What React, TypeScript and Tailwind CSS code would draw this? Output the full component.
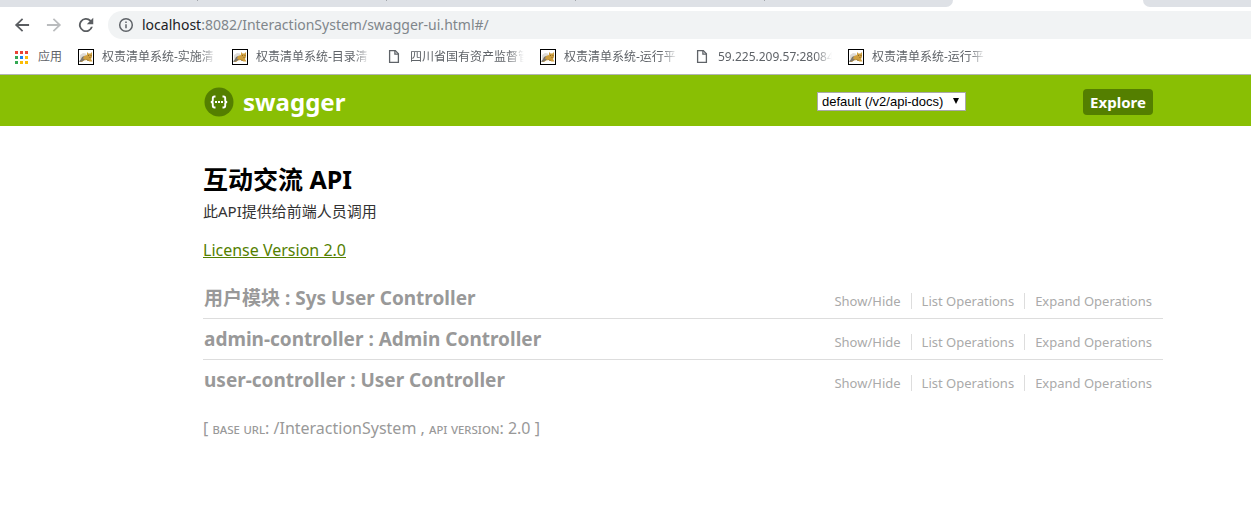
import React from "react";

const BOOKMARKS = [
  { kind: "cat", label: "权责清单系统-实施清" },
  { kind: "cat", label: "权责清单系统-目录清" },
  { kind: "page", label: "四川省国有资产监督管" },
  { kind: "cat", label: "权责清单系统-运行平" },
  { kind: "page", label: "59.225.209.57:28084" },
  { kind: "cat", label: "权责清单系统-运行平" },
];

const RESOURCES = [
  "用户模块 : Sys User Controller",
  "admin-controller : Admin Controller",
  "user-controller : User Controller",
];

const APP_DOTS = [
  "#ea4335", "#ea4335", "#ea4335",
  "#34a853", "#1a85f0", "#fbbc05",
  "#34a853", "#fbbc05", "#fbbc05",
];

function CatIcon() {
  return (
    <svg viewBox="0 0 16 16" className="size-4 shrink-0" aria-hidden="true">
      <rect width="16" height="16" fill="#000" />
      <rect x="1" y="1" width="14" height="14" fill="#fff" />
      <path d="M2 6l3-2 3 .5 1 2-4 3-3 1z" fill="#dedcd8" />
      <path d="M9 3l1.500 1.500h2L14 3v5l-1 2 1.500 2.500h-3L9 11l-3 .5-2 1.500H2l2-3 2-3 3-1z" fill="#cf9f3f" />
      <path d="M1 12.500L3 10l1-2 2-1-1 3 2 0-2 2-3 1z" fill="#7d776c" />
      <path d="M10 6h1v1h-1zM12.500 6h1v1h-1zM11 8h2v.6h-2zM8 10.500l3 .5-1 1z" fill="#8a6524" />
    </svg>
  );
}

function PageIcon() {
  return (
    <svg viewBox="0 0 16 16" className="size-4 shrink-0" fill="none" stroke="#5f6368" strokeWidth="1.3" aria-hidden="true">
      <path d="M3.600 1.600h5.700l3.100 3.200v8.600h-8.800z" />
      <path d="M8.900 1.800v3.400h3.400" />
    </svg>
  );
}

function BrowserChrome() {
  return (
    <header className="border-b border-[#b2b4b6] bg-white font-['Noto_Sans','Noto_Sans_CJK_SC',sans-serif]">
      <div className="flex h-[7px]">
        <div className="flex grow rounded-br-lg bg-[#dee1e6] pl-[197px]">
          {[0, 1, 2, 3].map((n) => (
            <span key={n} className="h-px w-[189px] border-l border-[#a3a6ab]" />
          ))}
        </div>
        <div className="w-[190px] shrink-0" />
        <div className="w-[108px] shrink-0 rounded-bl-lg bg-[#dee1e6]" />
      </div>
      <div className="flex h-9 items-center pl-3">
        <div className="flex w-24 gap-3">
          <button aria-label="Back" className="size-5 text-[#5a5d61]">
            <svg viewBox="0 0 24 24" fill="currentColor" className="size-5">
              <path d="M20.500 10.800H7.800l5.600-5.500L12 3.800 3.500 12l8.500 8.200 1.400-1.500-5.600-5.500h12.700z" />
            </svg>
          </button>
          <button aria-label="Forward" className="size-5 text-[#babcbe]">
            <svg viewBox="0 0 24 24" fill="currentColor" className="size-5">
              <path d="M3.500 10.800h12.700l-5.600-5.500L12 3.800l8.500 8.200-8.500 8.200-1.400-1.500 5.600-5.500H3.500z" />
            </svg>
          </button>
          <button aria-label="Reload" className="size-5 text-[#5a5d61]">
            <svg viewBox="0 0 24 24" fill="currentColor" className="size-5">
              <path d="M18 6a8.500 8.500 0 1 0 2.200 8.200h-2.300A6.300 6.300 0 1 1 16.400 7.600L13 11h7.700V3.300z" />
            </svg>
          </button>
        </div>
        <div className="flex h-7 grow items-center rounded-l-full bg-[#f1f3f4] pl-[10px]">
          <svg viewBox="0 0 16 16" className="size-4 shrink-0" fill="none" stroke="#5f6368" aria-hidden="true">
            <circle cx="8" cy="8" r="6.300" strokeWidth="1.500" />
            <path d="M8 7.200v4M8 4.500v1.600" strokeWidth="1.500" />
          </svg>
          <p className="pl-2 text-sm leading-5 text-[#80868b]">
            <span className="text-[#202124]">localhost</span>:8082/InteractionSystem/swagger-ui.html#/
          </p>
        </div>
      </div>
      <nav aria-label="Bookmarks" className="flex h-[31px] items-center pb-[3px] pl-[15px] text-xs leading-5 text-[#5f6368]">
        <a href="#apps" className="flex w-[63px] shrink-0 items-center gap-[10px]">
          <svg viewBox="0 0 13 13" className="size-[13px] shrink-0" aria-hidden="true">
            {APP_DOTS.map((c, i) => (
              <rect key={i} x={(i % 3) * 5} y={Math.floor(i / 3) * 5} width="3" height="3" fill={c} />
            ))}
          </svg>
          应用
        </a>
        {BOOKMARKS.map((b, i) => (
          <a key={i} href="#bookmark" className="flex w-[154px] shrink-0 items-center gap-2 pr-4">
            {b.kind === "cat" ? <CatIcon /> : <PageIcon />}
            <span className="min-w-0 grow overflow-hidden whitespace-nowrap [mask-image:linear-gradient(to_right,black_85%,transparent)]">
              {b.label}
            </span>
          </a>
        ))}
      </nav>
    </header>
  );
}

function SwaggerHeader() {
  return (
    <div className="flex h-[51px] items-center bg-[#89bf04] pt-[2px] pr-[98px] pl-[204px]">
      <a href="#swagger" className="flex items-center gap-[9px] text-2xl font-bold text-white">
        <svg viewBox="0 0 30 30" className="size-[30px]" aria-hidden="true">
          <circle cx="15" cy="15" r="14.500" fill="#547f00" />
          <g fill="none" stroke="#fff" strokeWidth="1.900">
            <path d="M11.500 9.500h-1q-1.700 0-1.700 1.700v2q0 1.800-2 1.800 2 0 2 1.800v2q0 1.700 1.700 1.700h1" />
            <path d="M18.500 9.500h1q1.700 0 1.700 1.700v2q0 1.800 2 1.800-2 0-2 1.800v2q0 1.700-1.700 1.700h-1" />
          </g>
          <path d="M11 14h2v2h-2zM14 14h2v2h-2zM17 14h2v2h-2z" fill="#fff" />
        </svg>
        swagger
      </a>
      <form className="ml-auto flex items-center gap-[117px]" onSubmit={(e) => e.preventDefault()}>
        <label className="relative block">
          <span className="sr-only">API group</span>
          <select className="block h-[19px] w-[149px] appearance-none border border-[#a9a9a9] bg-white pl-1 font-['Liberation_Sans',sans-serif] text-[13px] leading-4 text-black">
            <option>default (/v2/api-docs)</option>
          </select>
          <svg viewBox="0 0 8 8" className="pointer-events-none absolute top-[5px] right-[6px] size-2" aria-hidden="true">
            <path d="M1 1h6L4 7z" fill="#000" />
          </svg>
        </label>
        <button className="h-[26px] w-[70px] rounded bg-[#547f00] text-[15px] leading-5 font-bold text-white">Explore</button>
      </form>
    </div>
  );
}

export default function App() {
  return (
    <div className="min-h-screen bg-white font-['Noto_Sans','Noto_Sans_CJK_SC',sans-serif]">
      <BrowserChrome />
      <SwaggerHeader />
      <main className="pt-[35px] pr-[88px] pl-[203px]">
        <h1 className="text-[25px] leading-9 font-bold text-black">互动交流 API</h1>
        <p className="pt-1 text-[15px] leading-5 text-[#333]">此API提供给前端人员调用</p>
        <p className="pt-[17px] text-base leading-6">
          <a href="#license" className="text-[#547f00] underline">License Version 2.0</a>
        </p>
        <ul className="pt-4">
          {RESOURCES.map((name) => (
            <li key={name} className="flex h-[41px] items-center justify-between border-b border-[#ddd] pl-px last:border-transparent">
              <h2 className="text-[19px] leading-6 font-bold text-[#999]">{name}</h2>
              <ul className="flex pt-[5px] pr-[1px] text-[13px] leading-4 text-[#aaa]">
                {["Show/Hide", "List Operations", "Expand Operations"].map((action) => (
                  <li key={action} className="border-r border-[#ddd] px-[10px] last:border-r-0">
                    <a href="#resource">{action}</a>
                  </li>
                ))}
              </ul>
            </li>
          ))}
        </ul>
        <p className="pt-[15px] text-base leading-6 text-[#999]">
          [ <span className="text-sm [font-variant:small-caps]">base url</span>: /InteractionSystem ,{" "}
          <span className="text-sm [font-variant:small-caps]">api version</span>: 2.0 ]
        </p>
      </main>
    </div>
  );
}
